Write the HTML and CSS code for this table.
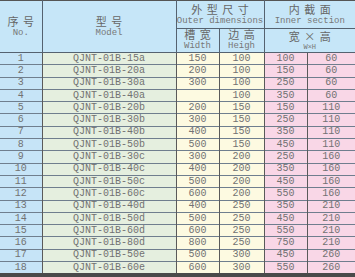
FILE: index.html
```html
<!DOCTYPE html>
<html lang="zh">
<head>
    <meta charset="UTF-8">
    <title>QJNT-01B 型号尺寸表</title>
    <link rel="stylesheet" href="styles.css">
</head>
<body>
    <table class="spec">
        <colgroup>
            <col class="c-no">
            <col class="c-model">
            <col class="c-w">
            <col class="c-h">
            <col class="c-iw">
            <col class="c-ih">
        </colgroup>
        <thead>
            <tr class="head-top">
                <th rowspan="2"><span class="zh">序 号</span><span class="en">No.</span></th>
                <th rowspan="2"><span class="zh">型 号</span><span class="en">Model</span></th>
                <th colspan="2"><span class="zh">外 型 尺 寸</span><span class="en">Outer dimensions</span></th>
                <th colspan="2"><span class="zh">内 截 面</span><span class="en">Inner section</span></th>
            </tr>
            <tr class="head-sub">
                <th><span class="zh">槽 宽</span><span class="en">Width</span></th>
                <th><span class="zh">边 高</span><span class="en">Heigh</span></th>
                <th colspan="2"><span class="zh">宽 × 高</span><span class="en small">W×H</span></th>
            </tr>
        </thead>
        <tbody id="rows"></tbody>
    </table>

    <script>
        // 序号, 型号后缀, 槽宽, 边高, 内宽, 内高
        const data = [
            ['15a', 150, 100, 100, 60],
            ['20a', 200, 100, 150, 60],
            ['30a', 300, 100, 250, 60],
            ['40a', '', 100, 350, 60],
            ['20b', 200, 150, 150, 110],
            ['30b', 300, 150, 250, 110],
            ['40b', 400, 150, 350, 110],
            ['50b', 500, 150, 450, 110],
            ['30c', 300, 200, 250, 160],
            ['40c', 400, 200, 350, 160],
            ['50c', 500, 200, 450, 160],
            ['60c', 600, 200, 550, 160],
            ['40d', 400, 250, 350, 210],
            ['50d', 500, 250, 450, 210],
            ['60d', 600, 250, 550, 210],
            ['80d', 800, 250, 750, 210],
            ['50e', 500, 300, 450, 260],
            ['60e', 600, 300, 550, 260]
        ];

        const body = document.getElementById('rows');
        body.innerHTML = data.map((r, i) => `
            <tr>
                <td class="no">${i + 1}</td>
                <td class="model">QJNT-01B-${r[0]}</td>
                <td class="outer">${r[1]}</td>
                <td class="outer">${r[2]}</td>
                <td class="inner">${r[3]}</td>
                <td class="inner">${r[4]}</td>
            </tr>`).join('');
    </script>
</body>
</html>
```

FILE: styles.css
```css
body {
    margin: 0;
    background: #fff;
}
.spec {
    width: 355px;
    table-layout: fixed;
    border-collapse: collapse;
    font-family: "Liberation Mono", "Noto Sans CJK SC", monospace;
    color: #727272;
    border-top: 1px solid #555;
    border-bottom: 4px solid #4a4a4a;
}
.c-no { width: 42px; }
.c-model { width: 134px; }
.c-w { width: 43px; }
.c-h { width: 45px; }
.c-iw { width: 43px; }
.c-ih { width: 48px; }

th {
    background: #c6e6f8;
    font-weight: normal;
    padding: 0;
    border: 1px solid #556270;
    border-top: none;
    text-align: center;
    line-height: 1;
    white-space: nowrap;
}
th:first-child { border-left: none; }
th:last-child { border-right: none; }
.head-top th { height: 27px; }
.head-sub th { height: 21px; }
.head-top th[rowspan] { padding-top: 1px; }

.zh {
    display: block;
    font-family: "Noto Sans CJK SC", sans-serif;
    font-size: 11px;
    color: #666;
    line-height: 12px;
    word-spacing: 2px;
}
.head-sub .zh { line-height: 11px; }
.en {
    display: block;
    font-size: 9px;
    line-height: 12px;
    color: #777;
}
.en.small {
    font-size: 7px;
    line-height: 8px;
    margin-top: 1px;
}

td {
    height: 11.3px;
    padding: 0;
    font-size: 10px;
    line-height: 10px;
    text-align: center;
    border-top: 1px solid #6f7e8e;
    border-left: 1px solid #5a5a5a;
    border-right: 1px solid #5a5a5a;
}
tbody tr { height: 12.3px; }
td:first-child { border-left: none; }
td:last-child { border-right: none; }
td.no { background: #c6e4f7; }
td.model { background: #e5efdf; }
td.outer { background: #fdfae1; }
td.inner { background: #f9d7e7; }
```
